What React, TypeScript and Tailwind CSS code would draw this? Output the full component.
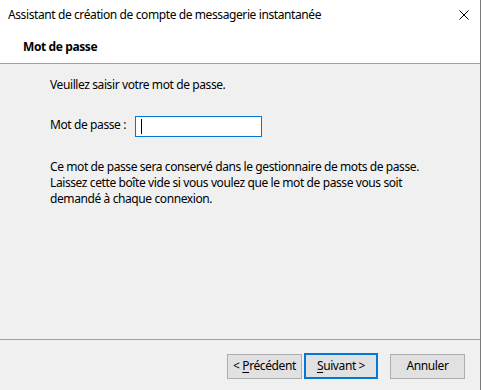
const font = "font-['Segoe_UI','Noto_Sans',sans-serif] tracking-[-0.4px]";

function WizardButton({
  children,
  primary,
}: {
  children: React.ReactNode;
  primary?: boolean;
}) {
  return (
    <button
      className={
        primary
          ? "h-[26px] w-[74px] whitespace-nowrap border-2 border-[#0078d7] bg-[#e1e1e1] text-[12px] text-black"
          : "h-[25px] w-[75px] whitespace-nowrap border border-[#adadad] bg-[#e1e1e1] text-[12px] text-black"
      }
    >
      {children}
    </button>
  );
}

export default function App() {
  return (
    <div
      className={`${font} flex h-[390px] w-[481px] flex-col border-r border-[#7a7a7a] bg-[#f0f0f0] text-[12px] text-black`}
    >
      {/* header */}
      <div className="h-[64px] border-b border-[#a0a0a0] bg-white">
        <div className="flex h-[30px] items-center justify-between pl-[8px] pr-[11px]">
          <span>Assistant de création de compte de messagerie instantanée</span>
          <svg width="10" height="10" viewBox="0 0 10 10" className="text-black">
            <path d="M0.5 0.5 L9.5 9.5 M9.5 0.5 L0.5 9.5" stroke="currentColor" strokeWidth="1" />
          </svg>
        </div>
        <div className="pl-[23px] pt-[8px] font-bold">Mot de passe</div>
      </div>

      {/* body */}
      <div className="flex flex-1 flex-col pl-[50px] pt-[13px] leading-[16px]">
        <p>Veuillez saisir votre mot de passe.</p>
        <div className="mt-[23px] flex items-center gap-[9px]">
          <span className="-mt-[3px] whitespace-nowrap">Mot de passe :</span>
          <div className="flex h-[21px] w-[127px] items-center border border-[#0078d7] bg-white pl-[5px]">
            <span className="h-[15px] w-px bg-black" />
          </div>
        </div>
        <p className="mt-[22px]">
          Ce mot de passe sera conservé dans le gestionnaire de mots de passe.
          <br />
          Laissez cette boîte vide si vous voulez que le mot de passe vous soit
          <br />
          demandé à chaque connexion.
        </p>
      </div>

      {/* footer */}
      <div className="h-[51px] border-t border-[#a0a0a0]">
        <div className="flex items-center pl-[227px] pt-[13px]">
          <WizardButton>
            &lt; <u className="underline-offset-2">P</u>récédent
          </WizardButton>
          <div className="ml-[2px]">
            <WizardButton primary>
              <u className="underline-offset-2">S</u>uivant &gt;
            </WizardButton>
          </div>
          <div className="ml-[12px]">
            <WizardButton>Annuler</WizardButton>
          </div>
        </div>
      </div>
    </div>
  );
}
